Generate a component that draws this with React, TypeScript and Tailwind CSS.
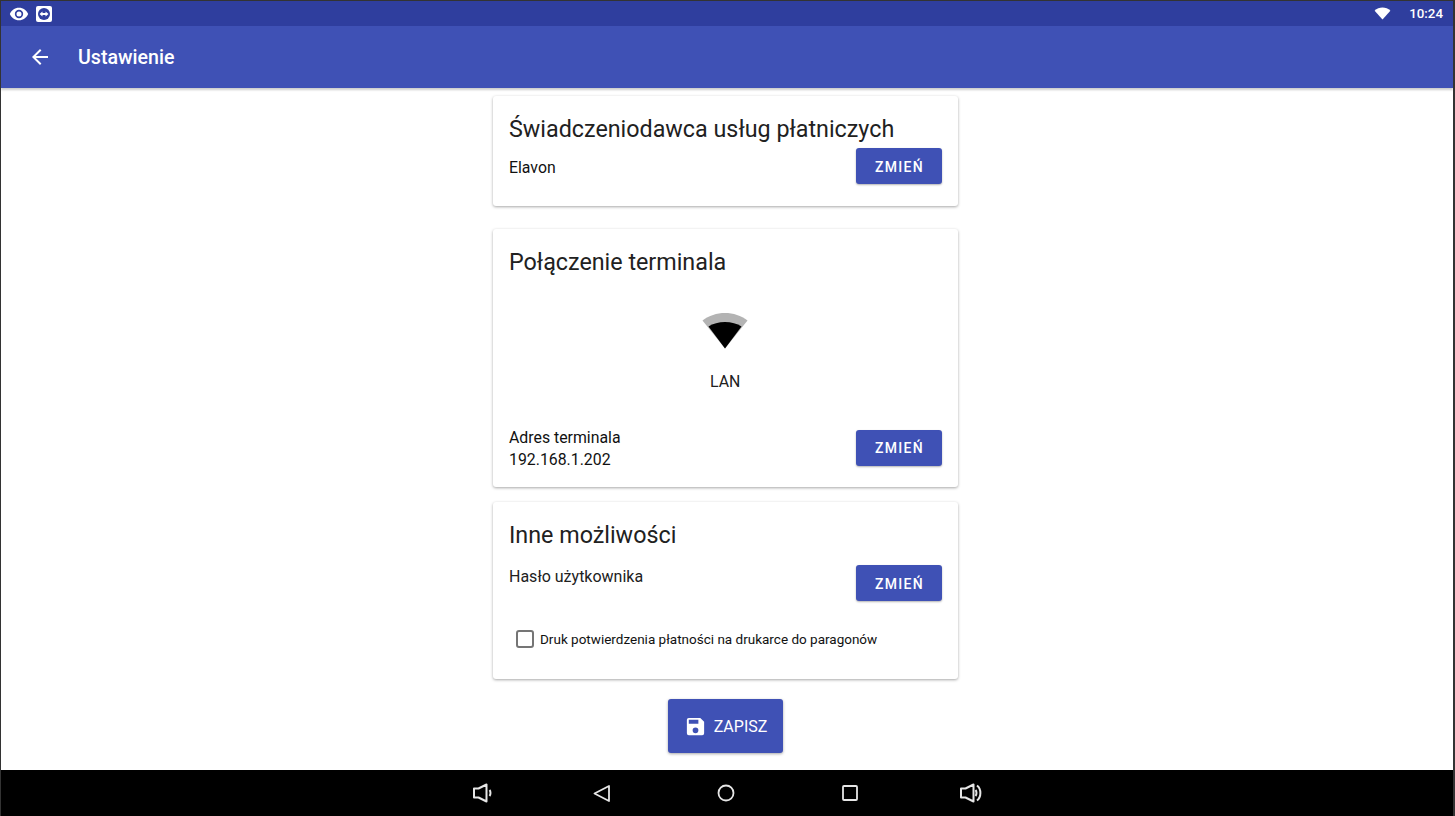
function ChangeButton() {
  return (
    <button className="w-[86px] h-[36px] pt-[2px] pl-[2px] bg-[#3f51b5] rounded-[3px] text-white text-[14px] font-medium tracking-[1.300px] shadow-[0_1px_2px_rgba(0,0,0,0.3)]">
      ZMIEŃ
    </button>
  );
}

function Card({ className, title, children }: { className: string; title: string; children: React.ReactNode }) {
  return (
    <section className={`w-[465px] bg-white rounded-[3px] pl-[16.500px] pr-4 shadow-[0_1px_3px_rgba(0,0,0,0.35)] ${className}`}>
      <h2 className="text-[23.300px] leading-[32px] text-[#212121] pt-[17px]">{title}</h2>
      {children}
    </section>
  );
}

export default function App() {
  return (
    <div className="w-[1455px] h-[816px] overflow-hidden flex flex-col bg-white border-t border-l border-r-2 border-[#333] font-['Roboto',sans-serif]">
      {/* Status bar */}
      <div className="h-[25px] shrink-0 bg-[#2f3e9e] flex items-center pl-[8px] pr-[10px] text-white">
        <svg viewBox="0 0 24 24" className="w-[20px] h-[20px]" fill="#fff">
          <path d="M12 4.500C7 4.500 2.730 7.610 1 12c1.730 4.390 6 7.500 11 7.500s9.270-3.110 11-7.500c-1.730-4.390-6-7.500-11-7.500zM12 17a5 5 0 1 1 0-10 5 5 0 0 1 0 10zm0-8a3 3 0 1 0 0 6 3 3 0 0 0 0-6z" />
        </svg>
        <div className="ml-[7px] w-4 h-4 bg-white rounded-[2px] flex items-center justify-center">
          <svg viewBox="0 0 16 16" className="w-4 h-4">
            <circle cx="8" cy="8" r="6" fill="#2f3e9e" />
            <path d="M3.500 8 6.500 5.500V7h3V5.500L12.500 8 9.500 10.500V9h-3v1.500z" fill="#fff" />
          </svg>
        </div>
        <div className="ml-auto flex items-center">
          <svg viewBox="0 0 18 14" className="w-[17px] h-[13px] mr-[18px]">
            <path d="M0.500 4 C5 -0.600 13 -0.600 17.500 4 L9 13.500z" fill="#fff" />
          </svg>
          <span className="text-[13.300px] leading-none font-medium">10:24</span>
        </div>
      </div>

      {/* App bar */}
      <header className="h-[62px] shrink-0 bg-[#3f51b5] flex items-center pl-[27px] text-white shadow-[0_2px_2px_rgba(0,0,0,0.2)] z-10">
        <svg viewBox="0 0 24 24" className="w-6 h-6" fill="#fff">
          <path d="M20 11H7.830l5.590-5.590L12 4l-8 8 8 8 1.410-1.410L7.830 13H20v-2z" />
        </svg>
        <h1 className="ml-[26px] pt-[2px] text-[19.600px] font-medium">Ustawienie</h1>
      </header>

      {/* Content */}
      <main className="flex-1 flex flex-col items-center pt-[8px] pr-[4px]">
        <Card className="h-[110px]" title="Świadczeniodawca usług płatniczych">
          <div className="flex items-center justify-between mt-[3px]">
            <span className="text-[15.850px] text-[#111] mt-[3px]">Elavon</span>
            <ChangeButton />
          </div>
        </Card>

        <Card className="h-[258px] mt-[23px]" title="Połączenie terminala">
          <div className="flex flex-col items-center mt-[34px]">
            <svg viewBox="0 0 46 37" className="w-[46px] h-[37px]">
              <path d="M0.500 8.500 C13 -1.500 33 -1.500 45.500 8.500 L23 36.500z" fill="#b3b3b3" />
              <path d="M6.500 14.500 C15 8.500 31 8.500 39.500 14.500 L23 36.500z" fill="#000" />
            </svg>
            <span className="text-[15.850px] text-[#212121] mt-[21px]">LAN</span>
          </div>
          <div className="flex items-start justify-between mt-[32px]">
            <div className="text-[15.850px] leading-[22px] text-[#111] pt-[1px]">
              <div>Adres terminala</div>
              <div>192.168.1.202</div>
            </div>
            <div className="mt-[4px]">
              <ChangeButton />
            </div>
          </div>
        </Card>

        <Card className="h-[177px] mt-[15px]" title="Inne możliwości">
          <div className="flex items-start justify-between mt-[14px]">
            <span className="text-[16px] text-[#212121]">Hasło użytkownika</span>
            <ChangeButton />
          </div>
          <label className="flex items-center mt-[28px] ml-[7px]">
            <span className="w-[18px] h-[18px] border-2 border-[#757575] rounded-[3px]" />
            <span className="ml-[6px] text-[13.500px] text-[#111]">Druk potwierdzenia płatności na drukarce do paragonów</span>
          </label>
        </Card>

        <button className="mt-[20px] w-[115px] h-[54px] pt-[1px] pl-[1px] bg-[#3f51b5] rounded-[3px] flex items-center justify-center text-white text-[16px] shadow-[0_1px_3px_rgba(0,0,0,0.35)]">
          <svg viewBox="0 0 24 24" className="w-[23px] h-[23px] mr-[7px]" fill="#fff">
            <path d="M17 3H5a2 2 0 0 0-2 2v14a2 2 0 0 0 2 2h14a2 2 0 0 0 2-2V7l-4-4zm-5 16a3 3 0 1 1 0-6 3 3 0 0 1 0 6zm3-10H5V5h10v4z" />
          </svg>
          ZAPISZ
        </button>
      </main>

      {/* Navigation bar */}
      <nav className="h-[46px] shrink-0 bg-black flex items-center justify-center text-[#e6e6e6] pl-[1px]">
        <svg viewBox="0 0 22 22" className="w-[22px] h-[22px]" fill="none" stroke="currentColor" strokeWidth="2" strokeLinejoin="round">
          <path d="M2 6.500h4.500L14.500 2.500v17L6.500 15.500H2z" />
          <path d="M17.500 8c1.300 1.500 1.300 4.500 0 6" />
        </svg>
        <svg viewBox="0 0 18 18" className="w-[18px] h-[18px] ml-[99px]" fill="none" stroke="currentColor" strokeWidth="1.800" strokeLinejoin="round">
          <path d="M16 2v15L1.500 9.500z" />
        </svg>
        <svg viewBox="0 0 18 18" className="w-[18px] h-[18px] ml-[106px]" fill="none" stroke="currentColor" strokeWidth="1.800">
          <circle cx="9" cy="9" r="7.500" />
        </svg>
        <svg viewBox="0 0 18 18" className="w-[18px] h-[18px] ml-[106px]" fill="none" stroke="currentColor" strokeWidth="1.800">
          <rect x="2" y="2" width="14" height="14" rx="1" />
        </svg>
        <svg viewBox="0 0 24 22" className="w-[24px] h-[22px] ml-[100px]" fill="none" stroke="currentColor" strokeWidth="2" strokeLinejoin="round">
          <path d="M2 6.500h4.500L14.500 2.500v17L6.500 15.500H2z" />
          <path d="M16.500 8c1.300 1.500 1.300 4.500 0 6" />
          <path d="M18 3.500c4.500 3.500 4.500 11.500 0 15" />
        </svg>
      </nav>
    </div>
  );
}
